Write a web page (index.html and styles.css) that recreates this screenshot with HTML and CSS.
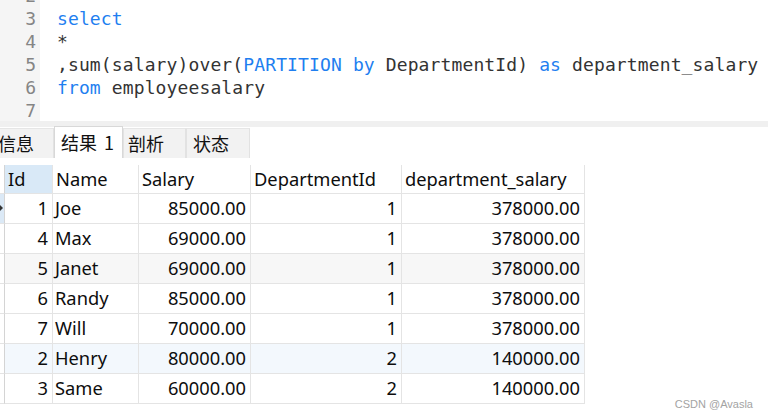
FILE: index.html
```html
<!DOCTYPE html>
<html lang="zh">
<head>
<meta charset="utf-8">
<title>Query</title>
<link rel="stylesheet" href="styles.css">
</head>
<body>
<div class="page">
  <div class="editor">
    <div class="gutter">
      <div class="ln">2</div>
      <div class="ln">3</div>
      <div class="ln">4</div>
      <div class="ln">5</div>
      <div class="ln">6</div>
      <div class="ln">7</div>
    </div>
    <div class="code">
      <div class="line"></div>
      <div class="line"><span class="kw">select</span></div>
      <div class="line">*</div>
      <div class="line">,sum(salary)over(<span class="kw">PARTITION</span> <span class="kw">by</span> DepartmentId) <span class="kw">as</span> department_salary</div>
      <div class="line"><span class="kw">from</span> employeesalary</div>
      <div class="line"></div>
    </div>
  </div>
  <div class="sep"></div>
  <div class="tabs">
    <div class="tab tab-info">信息</div>
    <div class="tab tab-active">结果 1</div>
    <div class="tab tab-prof">剖析</div>
    <div class="tab tab-status">状态</div>
  </div>
  <div class="grid">
    <div class="cell rh head"></div>
    <div class="cell head sel">Id</div>
    <div class="cell head">Name</div>
    <div class="cell head">Salary</div>
    <div class="cell head">DepartmentId</div>
    <div class="cell head">department_salary</div>

    <div class="cell rh cur"><span class="arrow"></span></div>
    <div class="cell num">1</div><div class="cell">Joe</div><div class="cell num">85000.00</div><div class="cell num">1</div><div class="cell num">378000.00</div>

    <div class="cell rh"></div>
    <div class="cell num">4</div><div class="cell">Max</div><div class="cell num">69000.00</div><div class="cell num">1</div><div class="cell num">378000.00</div>

    <div class="cell rh"></div>
    <div class="cell num alt">5</div><div class="cell alt">Janet</div><div class="cell num alt">69000.00</div><div class="cell num alt">1</div><div class="cell num alt">378000.00</div>

    <div class="cell rh"></div>
    <div class="cell num">6</div><div class="cell">Randy</div><div class="cell num">85000.00</div><div class="cell num">1</div><div class="cell num">378000.00</div>

    <div class="cell rh"></div>
    <div class="cell num">7</div><div class="cell">Will</div><div class="cell num">70000.00</div><div class="cell num">1</div><div class="cell num">378000.00</div>

    <div class="cell rh"></div>
    <div class="cell num hl">2</div><div class="cell hl">Henry</div><div class="cell num hl">80000.00</div><div class="cell num hl">2</div><div class="cell num hl">140000.00</div>

    <div class="cell rh"></div>
    <div class="cell num">3</div><div class="cell">Same</div><div class="cell num">60000.00</div><div class="cell num">2</div><div class="cell num">140000.00</div>
  </div>
  <div class="watermark">CSDN @Avasla</div>
</div>
</body>
</html>
```

FILE: styles.css
```css
html, body {
  margin: 0;
  padding: 0;
  background: #ffffff;
  overflow: hidden;
}

.page {
  position: relative;
  width: 768px;
  height: 417px;
  overflow: hidden;
  font-family: "Noto Sans", "Noto Sans CJK SC", sans-serif;
  color: #111;
}

.editor {
  display: flex;
  height: 121px;
  overflow: hidden;
  background: #ffffff;
}

.gutter {
  width: 40px;
  flex: none;
  background: #f5f5f5;
  margin-top: -16px;
  box-sizing: border-box;
  padding-right: 4px;
  text-align: right;
  font-family: "DejaVu Sans Mono", monospace;
  font-size: 18px;
  color: #858585;
}

.ln {
  height: 23px;
  line-height: 23px;
}

.code {
  margin-top: -16px;
  padding-left: 17px;
  font-family: "DejaVu Sans Mono", monospace;
  font-size: 18px;
  letter-spacing: 0.12px;
  color: #333333;
}

.line {
  height: 23px;
  line-height: 23px;
  white-space: pre;
}

.kw {
  color: #1f7ff0;
}

.sep {
  height: 6px;
  background: #f0f0f0;
}

.tabs {
  display: flex;
  height: 30px;
  background: #ffffff;
  font-family: "Noto Sans CJK SC", sans-serif;
  font-size: 18px;
  color: #111;
}

.tab {
  box-sizing: border-box;
  height: 30px;
  margin-top: 1px;
  line-height: 28px;
  padding-left: 5px;
  background: #f2f2f2;
  border: 1px solid #e2e2e2;
  border-top: 1px solid #e6e6e6;
  border-bottom: none;
  white-space: pre;
}

.tab-info {
  width: 58px;
  margin-left: -4px;
  padding-left: 1px;
}

.tab-active {
  width: 69px;
  margin-top: -1px;
  height: 32px;
  padding-left: 6px;
  background: #ffffff;
  border-color: #d8d8d8;
  line-height: 30px;
  word-spacing: 3px;
}

.tab-prof {
  width: 63px;
  padding-left: 4px;
}

.tab-status {
  width: 64px;
  padding-left: 6px;
}

.grid {
  margin-top: 8px;
  display: grid;
  grid-template-columns: 5px 48px 86px 112px 151px 183px;
  grid-auto-rows: 30px;
  grid-template-rows: 29px;
  font-size: 18.3px;
}

.cell {
  box-sizing: border-box;
  border-right: 1px solid #e4e4e4;
  border-bottom: 1px solid #e4e4e4;
  padding: 0 4px 0 2px;
  line-height: 28px;
  white-space: nowrap;
  overflow: hidden;
  color: #0d0d0d;
}

.head {
  line-height: 28px;
  padding-left: 3px;
}

.sel {
  background: #d9e9f7;
}

.rh {
  padding: 0;
  position: relative;
  border-right-color: #d4d4d4;
}

.rh.head {
  border-bottom-color: #e4e4e4;
}

.cur {
  background: #dbe9f6;
}

.arrow {
  position: absolute;
  left: 0;
  top: 11px;
  width: 0;
  height: 0;
  border-top: 3px solid transparent;
  border-bottom: 3px solid transparent;
  border-left: 3px solid #333;
}

.num {
  text-align: right;
}

.alt {
  background: #f7f7f7;
}

.hl {
  background: #f3f8fd;
}

.watermark {
  position: absolute;
  right: 15px;
  bottom: 7px;
  font-family: "Liberation Sans", sans-serif;
  font-size: 11px;
  color: #a3a3a3;
}
```
